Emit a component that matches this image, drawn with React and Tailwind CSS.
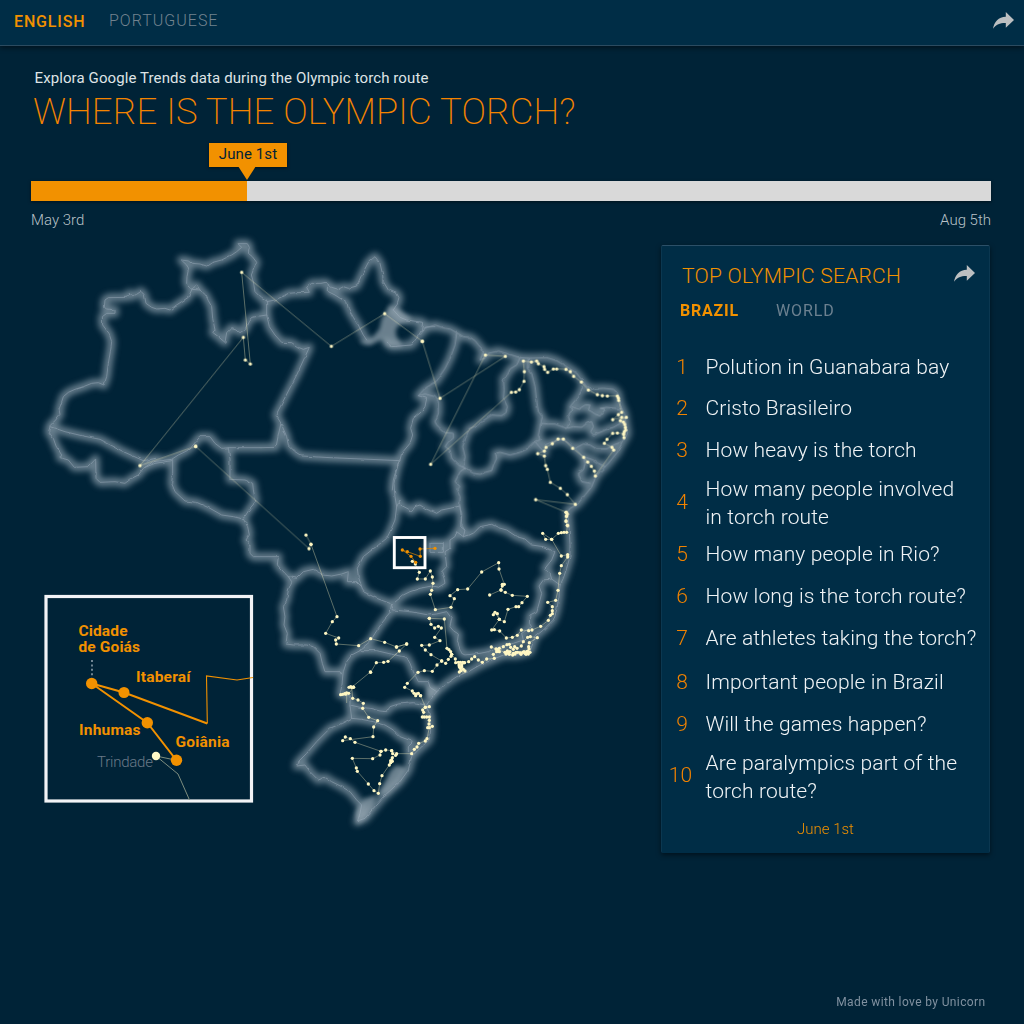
import React from "react";

// Each map sheet stores its outlines and stops at 3x, relative to its origin.
const SHEETS = [
  {
    id: "north-west",
    x: 40,
    y: 230,
    borders: [
      "30,587 47,570 60,553 57,538 62,525 70,500 85,487 105,478 130,470 155,460 175,458 192,465 200,440 205,400 211,365 215,335 207,310 188,285 187,260 200,250 225,250 225,240 200,237 193,232 195,210 205,203 260,202 268,190 275,200 290,193 303,184 313,195 318,220 335,232 350,237 375,235 390,240 405,228 425,215 445,202 455,180",
      "480,180 470,165 455,178 440,160 441,140 446,115 440,105 424,90 445,93 455,100 480,102 500,108 515,98 545,90 575,75 590,65 605,52 594,41 622,41 628,52 625,70 637,80 650,97 642,115 634,135 640,155 645,185 665,205 680,215",
      "455,178 480,180 497,195 505,212 515,230 518,265 525,300 518,307 535,320 555,337 560,308 575,293 588,297 600,308 615,298 625,275 635,262 680,255",
      "30,590 75,605 125,617 180,628 250,665 310,692 350,685",
      "30,590 26,605 40,625 48,648 65,675 60,683 85,690 103,712 145,710 167,687 168,745 180,757 225,755 255,760 275,745 295,735 310,715 340,695 395,688 415,675 440,663 455,650 480,620 510,620 525,640 545,655 570,653 660,653",
      "315,712 345,700 395,692",
    ],
  },
  {
    id: "north",
    x: 220,
    y: 230,
    borders: [
      "140,210 140,255 148,290 165,315 185,337 215,338 235,352 250,358 268,352 230,435 168,555 183,580 200,620 205,645 225,665 245,678 330,683 450,688 540,692",
      "183,580 175,615 168,652 120,653",
      "140,215 165,210 180,203 205,190 230,188 268,187 260,172 275,160 300,160 315,157 325,163 335,172 355,178 370,170 385,175 410,168 425,135 445,97 465,80 480,100 487,130 490,155 505,180 530,190 537,203 530,225 520,240",
      "325,165 325,185 345,195 365,208 380,215 385,235 400,262 415,285 430,315 440,330",
      "520,240 540,262 560,270 608,277 605,300 590,325 575,345 515,350 500,338",
      "605,305 615,292 630,290 645,290",
      "595,497 620,505 615,530 605,545 580,565 572,595 578,615 570,640 545,670 540,690 530,715 520,750 517,780",
    ],
    lakes: [
      "432,335 460,325 482,300 490,265 512,232 535,243 568,268 535,280 522,300 525,320 540,345 508,345 485,325 450,340",
    ],
  },
  {
    id: "north-east",
    x: 420,
    y: 290,
    borders: [
      "0,135 18,112 30,110 45,105 60,110 75,115 90,117 110,128 130,140 150,142 165,152 175,165 185,175 190,187 180,210 195,205 205,190 235,183 275,195 300,203 330,205 380,203 410,212 440,230 470,250 500,290 515,297 550,295 580,298 593,310 597,335 605,355 613,370 617,400 622,430 615,445 605,460 592,487 565,520 540,545 525,565 515,590 495,615 470,645 450,655 443,665",
      "110,128 105,165 90,205 75,235 48,275 15,295 -5,317 15,312 45,320 55,335 55,370 45,395 50,405 75,428 100,430 100,445 85,455 75,470 90,480 95,505 115,525 135,535",
      "300,203 290,225 270,237 262,255 250,265 252,300 250,325 262,350 258,368 245,377 215,375 185,395 165,410 148,415 140,435 128,470 135,500 130,530 135,535",
      "325,205 322,235 335,250 345,290 350,335 355,365 367,380 362,400 355,435 360,450 345,455",
      "345,455 325,475 300,487 270,495 240,487 225,490 230,505 220,525 215,542 195,547 180,553 160,550 135,535",
      "135,535 120,545 105,575 120,590 110,600 120,620 118,650 125,670 122,700 133,720",
      "362,400 385,402 405,402 420,408 440,415 460,410 485,412 500,400 515,395 520,410 512,425 520,435 545,425 560,418 580,412 610,395",
      "440,415 450,395 445,380 455,360 450,350 475,320 490,290",
      "455,350 475,358 495,345 510,345 505,360 515,365 525,372 540,378 555,358 540,355 560,352 605,357",
      "345,455 375,490",
      "375,465 400,455 425,448 440,455 465,475 490,462 510,465 530,477 560,477 580,465 600,458",
      "465,475 490,500 520,510 535,520 555,530",
      "490,500 495,520 490,540 475,550 485,575 510,580",
    ],
  },
  {
    id: "west",
    x: 160,
    y: 440,
    borders: [
      "38,58 38,100 35,130 45,155 75,183 110,187 150,205 185,225 220,230 250,237",
      "205,23 210,60 210,118 255,120 278,130 280,150 287,185 270,205 250,237",
      "250,237 263,260 268,285 258,300 270,315 270,340 280,350 355,350 352,375 375,400 385,410",
      "385,410 410,415 430,395 460,388 490,405 515,408 545,402 565,395 562,425 590,425 605,440",
      "635,330 610,350 592,385 595,410 605,440 610,455 650,475 690,490",
      "385,410 395,425 385,450 380,480 370,500 375,530 372,555 382,580 378,612 400,615 440,615 460,620 480,640 487,670 495,695 540,695 545,705",
      "695,490 690,520 665,550 645,580 630,605 600,630",
    ],
  },
  {
    id: "centre",
    x: 370,
    y: 460,
    borders: [
      "88,0 80,30 72,70 75,110 80,140 75,180 60,215 50,235 25,255 5,270",
      "80,140 90,120 92,135 115,147 125,155 135,140 150,135 170,148 190,155 200,160 215,150 240,145 270,138",
      "270,140 275,175 272,200 285,210 280,230",
      "280,230 260,215 255,230 240,240 240,265 225,275 230,320 215,335 222,355 225,370 205,382 185,378 150,385 120,395 100,405 65,435",
      "280,230 310,220 330,200 365,193 385,203 410,210 440,230 465,237 485,255 520,260 555,275 545,300 525,325 540,340 545,357 520,360 507,378 515,400 510,420 500,455 480,465 478,490 485,500 455,520",
      "545,357 570,375",
      "65,435 70,450 120,455 150,460 175,465 200,462 230,455 245,475 240,500 250,512 265,522 262,545 275,580 285,585 330,580 355,575 390,560 430,550 460,540 455,520",
      "593,155 597,200 600,250 600,290 590,325 580,355 570,375 567,410 560,450 550,480 520,510 495,530 480,575 440,585 400,585 370,598 330,615 295,635 260,650 230,670 200,695",
      "180,250 220,250 220,277 180,277 180,250",
    ],
  },
  {
    id: "south",
    x: 270,
    y: 600,
    borders: [
      "270,152 245,165 230,185 220,215 215,260 210,283 240,288",
      "270,152 320,152 375,165 410,172 420,190 430,215 445,245 475,245 480,262 500,275",
      "240,288 240,315 270,322 300,325 330,333 350,335 360,320 385,312 430,308 465,315",
      "240,315 245,355 275,358 310,365 345,375 370,390 390,410 430,425 415,440 415,455",
      "500,275 480,300 470,315 480,350 482,390 478,420 450,445 425,470 415,510 390,545 340,590 310,625 285,655 265,662",
      "245,355 215,370 180,385 140,425 110,460 85,485 80,498 105,495 120,515 145,540 165,532 185,545 215,560 240,575 260,600 275,615 270,640 262,665",
    ],
    lakes: [
      "380,500 405,508 385,545 350,578 330,580 350,545 365,515",
      "285,600 312,592 305,620 285,650 265,665 262,640 275,615",
      "475,262 500,270 482,292 472,285",
    ],
  },
];

// A route is a chain of stops, drawn as a line with a dot at every stop.
const ROUTES = [
  { x: 40, y: 230, pts: "467,649 300,707 610,322 616,390 631,402 605,127 874,349 1034,251 1147,334" },
  {
    x: 420,
    y: 290,
    pts: "7,154 60,325 256,199 196,195 32,523 274,307 287,306 298,299 312,274 313,245 310,213 334,216 350,213 355,221 372,230 374,238 383,247 400,237 410,237 438,238 451,245 461,259 484,276 505,300 532,314 547,317 562,318 592,318 595,324 596,331 605,367 595,374 578,389 605,382 619,382 601,392 610,396 614,403 616,412 617,420 613,425 611,433 612,443 611,431 592,429 578,430 561,448 553,460 576,472 581,480 526,558 523,543 514,529 503,516 491,502 458,475 430,447 414,447 397,461 378,472 373,483 353,491 373,498 377,527 382,538 391,577 421,595 442,614 466,643 347,629 439,667 442,672 439,679 438,694 443,707",
  },
  { x: 160, y: 440, pts: "107,19 447,326 453,313 438,285" },
  {
    x: 160,
    y: 440,
    pts: "453,313 531,530 517,545 497,580 536,594 527,600 529,612 596,617 632,596 674,607 710,621 740,612",
  },
  {
    x: 370,
    y: 460,
    pts: "588,157 590,168 588,183 592,196 590,217 582,217 574,218 565,220 545,238 527,238 518,220 545,238 574,288 593,284 593,291 574,317 569,340 564,391 557,421 533,427 547,440 547,452 547,461 541,466 535,481 512,499 486,510 476,512 454,510 442,526 427,532 409,534 389,513 373,509 365,510 388,478 403,485 414,448 438,440 446,440 456,428 472,409 427,406 406,397 393,390 397,378 403,373 387,327 386,308 335,336 293,387 263,389 240,407 253,416 243,442 196,449 181,403 185,391 189,370 187,351 181,333 166,357 142,357 148,337 136,312 127,304",
  },
  { x: 370, y: 460, pts: "388,478 375,457 370,464 382,461 388,478" },
  { x: 370, y: 460, pts: "359,405 393,390 397,373" },
  {
    x: 370,
    y: 460,
    pts: "178,475 183,493 194,504 205,499 214,504 194,532 210,542 178,555 155,556 166,570 183,584 215,603 227,610 235,598 243,589 245,583 242,575 237,569 231,565 223,477 178,475",
  },
  {
    x: 370,
    y: 460,
    pts: "245,583 256,597 257,608 265,607 267,615 271,607 278,607 283,608 275,614 268,620 271,625 275,620 280,628 285,633 273,632 268,636 283,608 296,605 305,597 314,590 325,600 337,607 350,597 373,595 370,583 380,575 378,567 388,565 384,570 388,575 400,560 411,554 418,553 422,562 430,568 434,560 441,565 454,558 460,545 473,532 481,530 502,533 478,548 476,560 477,567 473,574",
  },
  {
    x: 370,
    y: 460,
    pts: "364,561 380,568 405,577 412,573 408,582 415,580 413,576 420,575 418,583 428,585 430,580 435,582 438,577 443,577 450,578 453,583 458,577 465,580 462,575 470,575 468,583 475,582 480,577",
  },
  { x: 370, y: 460, pts: "215,603 201,615 187,634 163,632 144,637 112,670 104,682 127,693 132,700 137,707 139,702 145,700 151,707" },
  { x: 370, y: 460, pts: "79,561 110,552 88,573 54,604 41,607 19,608 2,637" },
  {
    x: 270,
    y: 600,
    pts: "301,216 245,262 250,261 242,260 237,262 245,262 248,295 264,300 280,310 278,325 296,352 323,362 311,381 309,410 218,422 226,411 241,416 255,427 333,454 347,450 365,452 380,461 425,461 433,448 441,441 446,430 466,423 471,416 478,383 487,379 473,383 477,372 478,361 478,351 470,351 463,351 457,351 461,337 458,330 466,322 478,320 466,322 452,287",
  },
  { x: 270, y: 600, pts: "251,262 236,280 230,279 227,282 224,281 218,283 212,284" },
  {
    x: 270,
    y: 600,
    pts: "333,454 330,465 308,476 247,475 259,504 262,514 295,552 312,572 325,580 329,551 336,527 358,495 362,488 367,484 365,480 362,482 367,473 377,466 368,461 365,452",
  },
];

const ORANGE_ROUTE = "137,307 123,289 97,270 112,275 151,289 150,267 195,265";

const SEARCHES = [
  { text: "Polution in Guanabara bay", h: "h-[42px]" },
  { text: "Cristo Brasileiro", h: "h-[40px]" },
  { text: "How heavy is the torch", h: "h-[43px]" },
  { text: "How many people involved\nin torch route", h: "h-[64px]", lift: "pb-[2px]" },
  { text: "How many people in Rio?", h: "h-[38px]" },
  { text: "How long is the torch route?", h: "h-[45px]" },
  { text: "Are athletes taking the torch?", h: "h-[40px]" },
  { text: "Important people in Brazil", h: "h-[47px]" },
  { text: "Will the games happen?", h: "h-[38px]" },
  { text: "Are paralympics part of the\ntorch route?", h: "h-[68px]", lift: "pb-[4px] pr-[3px]" },
];

function Dots({ pts, fill }) {
  return pts.split(" ").map((p, i) => {
    const [x, y] = p.split(",");
    return <circle key={i} cx={x} cy={y} r="4.9" fill={fill} />;
  });
}

function Borders({ stroke, width }) {
  return SHEETS.map((s) => (
    <g key={s.id} transform={`translate(${s.x} ${s.y}) scale(0.33333)`}>
      {s.borders.map((b, i) => (
        <polyline
          key={i}
          points={b}
          fill="none"
          stroke={stroke}
          strokeWidth={width}
          strokeLinejoin="round"
          strokeLinecap="round"
        />
      ))}
    </g>
  ));
}

function Inset() {
  return (
    <g>
      <rect x="46" y="596.5" width="205.5" height="204.5" fill="#002337" stroke="#f2f3f6" strokeWidth="3.2" />
      <g fill="none">
        <path d="M92 660v17" stroke="#9fb0bb" strokeWidth="1.4" strokeDasharray="2 2.4" />
        <path d="M176.500 760.300L156 756 178 774 189.500 800" stroke="#7d8d7f" strokeWidth="1" />
        <path d="M176.500 760.300L147.300 722.700 91.700 683.500 124 692.500 207.300 723.500" stroke="#f29100" strokeWidth="1.9" />
        <path d="M207.300 723.500L206.500 676 237 680 253 677.500" stroke="#f29100" strokeWidth="1.1" />
      </g>
      <g fill="#f29100">
        <circle cx="91.700" cy="683.500" r="5.700" />
        <circle cx="124" cy="692.500" r="5.500" />
        <circle cx="147.300" cy="722.700" r="5.700" />
        <circle cx="176.500" cy="760.300" r="5.700" />
      </g>
      <circle cx="156" cy="756" r="4.200" fill="#fff9c8" />
      <g className="text-[15.5px] font-bold" fill="#f29100">
        <text x="78.500" y="636" textLength="49" lengthAdjust="spacing">Cidade</text>
        <text x="78.500" y="652" textLength="61.500" lengthAdjust="spacing">de Goiás</text>
        <text x="136" y="682" textLength="54.500" lengthAdjust="spacing">Itaberaí</text>
        <text x="79" y="735" textLength="61.500" lengthAdjust="spacing">Inhumas</text>
        <text x="175.500" y="747" textLength="54" lengthAdjust="spacing">Goiânia</text>
      </g>
      <text x="97" y="767" textLength="56" className="text-[15px] font-light" fill="#6a7a88">Trindade</text>
    </g>
  );
}

function BrazilMap() {
  return (
    <svg viewBox="0 232 640 608" className="block h-[608px] w-[640px] shrink-0">
      <defs>
        <filter id="glow" filterUnits="userSpaceOnUse" x="0" y="200" width="680" height="660">
          <feGaussianBlur stdDeviation="3.4" />
        </filter>
        <filter id="soft" filterUnits="userSpaceOnUse" x="0" y="200" width="680" height="660">
          <feGaussianBlur stdDeviation="2.2" />
        </filter>
        <filter id="coast" filterUnits="userSpaceOnUse" x="0" y="200" width="680" height="660" colorInterpolationFilters="sRGB">
          <feTurbulence type="fractalNoise" baseFrequency="0.15" numOctaves="1" seed="4" result="n" />
          <feDisplacementMap in="SourceGraphic" in2="n" scale="3" xChannelSelector="R" yChannelSelector="G" />
        </filter>
      </defs>
      <g filter="url(#glow)" opacity="0.7">
        <Borders stroke="#9aabb7" width="24" />
      </g>
      <g filter="url(#soft)" opacity="0.72">
        {SHEETS.filter((s) => s.lakes).map((s) => (
          <g key={s.id} transform={`translate(${s.x} ${s.y}) scale(0.33333)`} fill="#94a5b0" stroke="#94a5b0" strokeWidth="9">
            {s.lakes.map((l, i) => (
              <polygon key={i} points={l} />
            ))}
          </g>
        ))}
      </g>
      <g filter="url(#coast)" opacity="0.42">
        <Borders stroke="#a8b6c4" width="3" />
      </g>
      {ROUTES.map((r, i) => (
        <g key={i} transform={`translate(${r.x} ${r.y}) scale(0.33333)`}>
          <polyline points={r.pts} fill="none" stroke="#fff6c0" strokeOpacity="0.36" strokeWidth="3" />
        </g>
      ))}
      <path d="M346.700 694v9M463 667v7" stroke="#fff6c0" strokeOpacity="0.36" />
      {ROUTES.map((r, i) => (
        <g key={i} transform={`translate(${r.x} ${r.y}) scale(0.33333)`}>
          <Dots pts={r.pts} fill="#fff7c3" />
        </g>
      ))}
      <g transform="translate(370 460) scale(0.33333)">
        <polyline points={ORANGE_ROUTE} fill="none" stroke="#d98200" strokeOpacity="0.7" strokeWidth="3" />
        <Dots pts={ORANGE_ROUTE} fill="#f29100" />
      </g>
      <rect x="394.300" y="537.500" width="30.700" height="30.200" fill="none" stroke="#ffffff" strokeWidth="2.900" />
      <Inset />
    </svg>
  );
}

function ShareIcon() {
  return (
    <svg viewBox="0 0 21 17" className="block h-[17px] w-[21px]" fill="#bcbfc1">
      <path d="M0 16.800C1.200 9.800 5.500 5 12.800 4.700V0L21 8 12.800 15.700V11C7.500 10.800 3.400 12.200 0 16.800Z" />
    </svg>
  );
}

export default function App() {
  return (
    <div className="flex h-[1024px] w-[1024px] flex-col overflow-hidden bg-[#002337] font-['Roboto','Liberation_Sans',sans-serif]">
      <header className="flex h-[46px] shrink-0 items-start justify-between border-b border-[#2b4b60] bg-[#002d46] pl-[14px] pr-[10.5px] pt-[12px] shadow-[0_2px_5px_rgba(0,0,0,0.45)]">
        <nav className="flex gap-[23px] text-[16px] leading-[18px]">
          <span className="w-[72px] whitespace-nowrap pt-px font-medium tracking-[0.85px] text-[#f29100]">ENGLISH</span>
          <span className="whitespace-nowrap font-light tracking-[1px] text-[#72838f]">PORTUGUESE</span>
        </nav>
        <ShareIcon />
      </header>

      <section className="flex h-[186px] shrink-0 flex-col pl-[31px] pr-[33px] pt-[22px]">
        <p className="pl-[3.5px] text-[15px] leading-[20px] tracking-[0.1px] text-[#dfe3e6]">Explora Google Trends data during the Olympic torch route</p>
        <h1 className="mt-[3px] whitespace-nowrap pl-[2px] text-[36.5px] font-extralight leading-[42px] tracking-[0.1px] text-[#f58400]">WHERE IS THE OLYMPIC TORCH?</h1>
        <div className="relative mt-[48px] h-[20px] bg-[#d9d9d9] shadow-[0_1px_3px_rgba(0,0,0,0.5)]">
          <div className="h-full w-[216px] bg-[#f29100]" />
          <div className="absolute left-[178px] top-[-38px] flex flex-col items-center">
            <div className="h-[24px] w-[78px] bg-[#f29100] text-center text-[15px] leading-[22px] tracking-[0.1px] text-[#002337] shadow-[0_1px_3px_rgba(0,0,0,0.5)]">June 1st</div>
            <svg viewBox="0 0 18 14" className="-mt-px ml-[-2px] block h-[14px] w-[18px]" fill="#f29100">
              <path d="M0 0H18L9 14Z" />
            </svg>
          </div>
        </div>
        <div className="mt-[9px] flex justify-between text-[15px] font-light leading-[20px] text-[#b9c2c8]">
          <span>May 3rd</span>
          <span>Aug 5th</span>
        </div>
      </section>

      <main className="flex">
        <BrazilMap />
        <aside className="ml-[21px] mt-[13px] flex h-[608px] w-[329px] flex-col rounded-[2px] border border-b-0 border-t-[#2c5068] border-x-[#0b3750] bg-[#002d46] shadow-[0_2px_5px_rgba(0,0,0,0.5)]">
          <div className="flex justify-between pl-[20px] pr-[14px] pt-[17px]">
            <h2 className="whitespace-nowrap text-[21px] font-light leading-[26px] tracking-[0.24px] text-[#f29100]">TOP OLYMPIC SEARCH</h2>
            <div className="pt-[2px]">
              <ShareIcon />
            </div>
          </div>
          <div className="mt-[12px] flex pl-[18px] text-[16px] leading-[20px]">
            <span className="w-[96px] font-bold tracking-[0.8px] text-[#f29100]">BRAZIL</span>
            <span className="tracking-[0.9px] text-[#6c8190]">WORLD</span>
          </div>
          <ol className="mt-[25px]">
            {SEARCHES.map((s, i) => (
              <li key={s.text} className={`flex items-center ${s.h}`}>
                <span className={`w-[40px] shrink-0 text-center text-[21px] font-light leading-[28px] text-[#f08200] ${s.lift || ""}`}>{i + 1}</span>
                <span className="ml-[3.5px] whitespace-pre text-[21px] font-light leading-[28px] tracking-[0.12px] text-[#f0f4f6]">{s.text}</span>
              </li>
            ))}
          </ol>
          <div className="mt-[8px] text-center text-[15px] font-light leading-[20px] text-[#f29100]">June 1st</div>
        </aside>
      </main>

      <footer className="mt-auto pb-[14px] pr-[38.5px] text-right text-[12px] leading-[16px] tracking-[0.38px] text-[#8091a0]">Made with love by Unicorn</footer>
    </div>
  );
}
